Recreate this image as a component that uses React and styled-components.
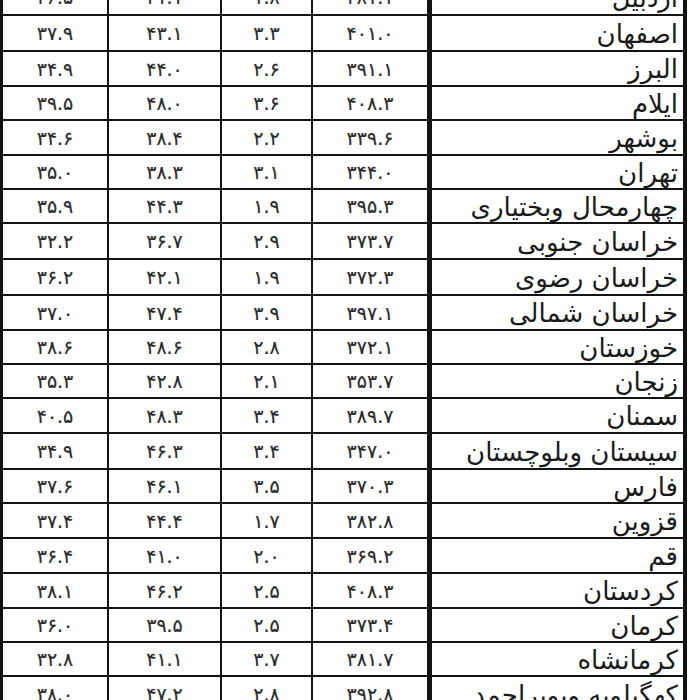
import React from "react"
import styled, { createGlobalStyle } from "styled-components"

const GlobalStyle = createGlobalStyle`
  html, body {
    margin: 0;
    padding: 0;
    background: #fff;
  }
  body {
    font-family: "DejaVu Sans", "Noto Sans", sans-serif;
    color: #1e1e1e;
  }
`

const Frame = styled.div`
  width: 687px;
  height: 700px;
  box-sizing: border-box;
  border-left: 3px solid #111;
  border-right: 4px solid #111;
  overflow: hidden;
  background: #fff;
`

const Table = styled.div`
  margin-top: -20px;
`

const Row = styled.div`
  display: grid;
  grid-template-columns: 106px 113px 91px 119px 1fr;
  height: ${(p) => p.$h}px;
  box-sizing: border-box;
  border-bottom: 2px solid #141414;
`

const NumCell = styled.div`
  display: flex;
  align-items: center;
  justify-content: center;
  box-sizing: border-box;
  border-right: ${(p) => (p.$thick ? 5 : 2)}px solid #141414;
  font-size: 19px;
  direction: ltr;
  color: #2a2a2a;
  -webkit-text-stroke: 0.2px #2a2a2a;
`

const NameCell = styled.div`
  display: flex;
  align-items: center;
  justify-content: flex-start;
  direction: rtl;
  padding-right: 5px;
  padding-top: 1px;
  font-size: 26px;
  white-space: nowrap;
  color: #1a1a1a;
`

const rows = [
  ["۳۶.۵", "۴۱.۱", "۱.۸", "۳۸۱.۱", "اردبیل", 36],
  ["۳۷.۹", "۴۳.۱", "۳.۳", "۴۰۱.۰", "اصفهان", 36],
  ["۳۴.۹", "۴۴.۰", "۲.۶", "۳۹۱.۱", "البرز", 35],
  ["۳۹.۵", "۴۸.۰", "۳.۶", "۴۰۸.۳", "ایلام", 34],
  ["۳۴.۶", "۳۸.۴", "۲.۲", "۳۳۹.۶", "بوشهر", 35],
  ["۳۵.۰", "۳۸.۳", "۳.۱", "۳۴۴.۰", "تهران", 34],
  ["۳۵.۹", "۴۴.۳", "۱.۹", "۳۹۵.۳", "چهارمحال وبختیاری", 34],
  ["۳۲.۲", "۳۶.۷", "۲.۹", "۳۷۳.۷", "خراسان جنوبی", 36],
  ["۳۶.۲", "۴۲.۱", "۱.۹", "۳۷۲.۳", "خراسان رضوی", 36],
  ["۳۷.۰", "۴۷.۴", "۳.۹", "۳۹۷.۱", "خراسان شمالی", 35],
  ["۳۸.۶", "۴۸.۶", "۲.۸", "۳۷۲.۱", "خوزستان", 34],
  ["۳۵.۳", "۴۲.۸", "۲.۱", "۳۵۳.۷", "زنجان", 34],
  ["۴۰.۵", "۴۸.۳", "۳.۴", "۳۸۹.۷", "سمنان", 35],
  ["۳۴.۹", "۴۶.۳", "۳.۴", "۳۴۷.۰", "سیستان وبلوچستان", 36],
  ["۳۷.۶", "۴۶.۱", "۳.۵", "۳۷۰.۳", "فارس", 34],
  ["۳۷.۴", "۴۴.۴", "۱.۷", "۳۸۲.۸", "قزوین", 35],
  ["۳۶.۴", "۴۱.۰", "۲.۰", "۳۶۹.۲", "قم", 35],
  ["۳۸.۱", "۴۶.۲", "۲.۵", "۴۰۸.۳", "کردستان", 35],
  ["۳۶.۰", "۳۹.۵", "۲.۵", "۳۷۳.۴", "کرمان", 34],
  ["۳۲.۸", "۴۱.۱", "۳.۷", "۳۸۱.۷", "کرمانشاه", 34],
  ["۳۸.۰", "۴۷.۲", "۲.۸", "۳۹۲.۸", "کهگیلویه وبویراحمد", 36],
]

const App = () => {
  return (
    <Frame>
      <GlobalStyle />
      <Table>
        {rows.map((r, i) => (
          <Row key={i} $h={r[5]}>
            <NumCell>{r[0]}</NumCell>
            <NumCell>{r[1]}</NumCell>
            <NumCell>{r[2]}</NumCell>
            <NumCell $thick>{r[3]}</NumCell>
            <NameCell>{r[4]}</NameCell>
          </Row>
        ))}
      </Table>
    </Frame>
  )
}

export default App
